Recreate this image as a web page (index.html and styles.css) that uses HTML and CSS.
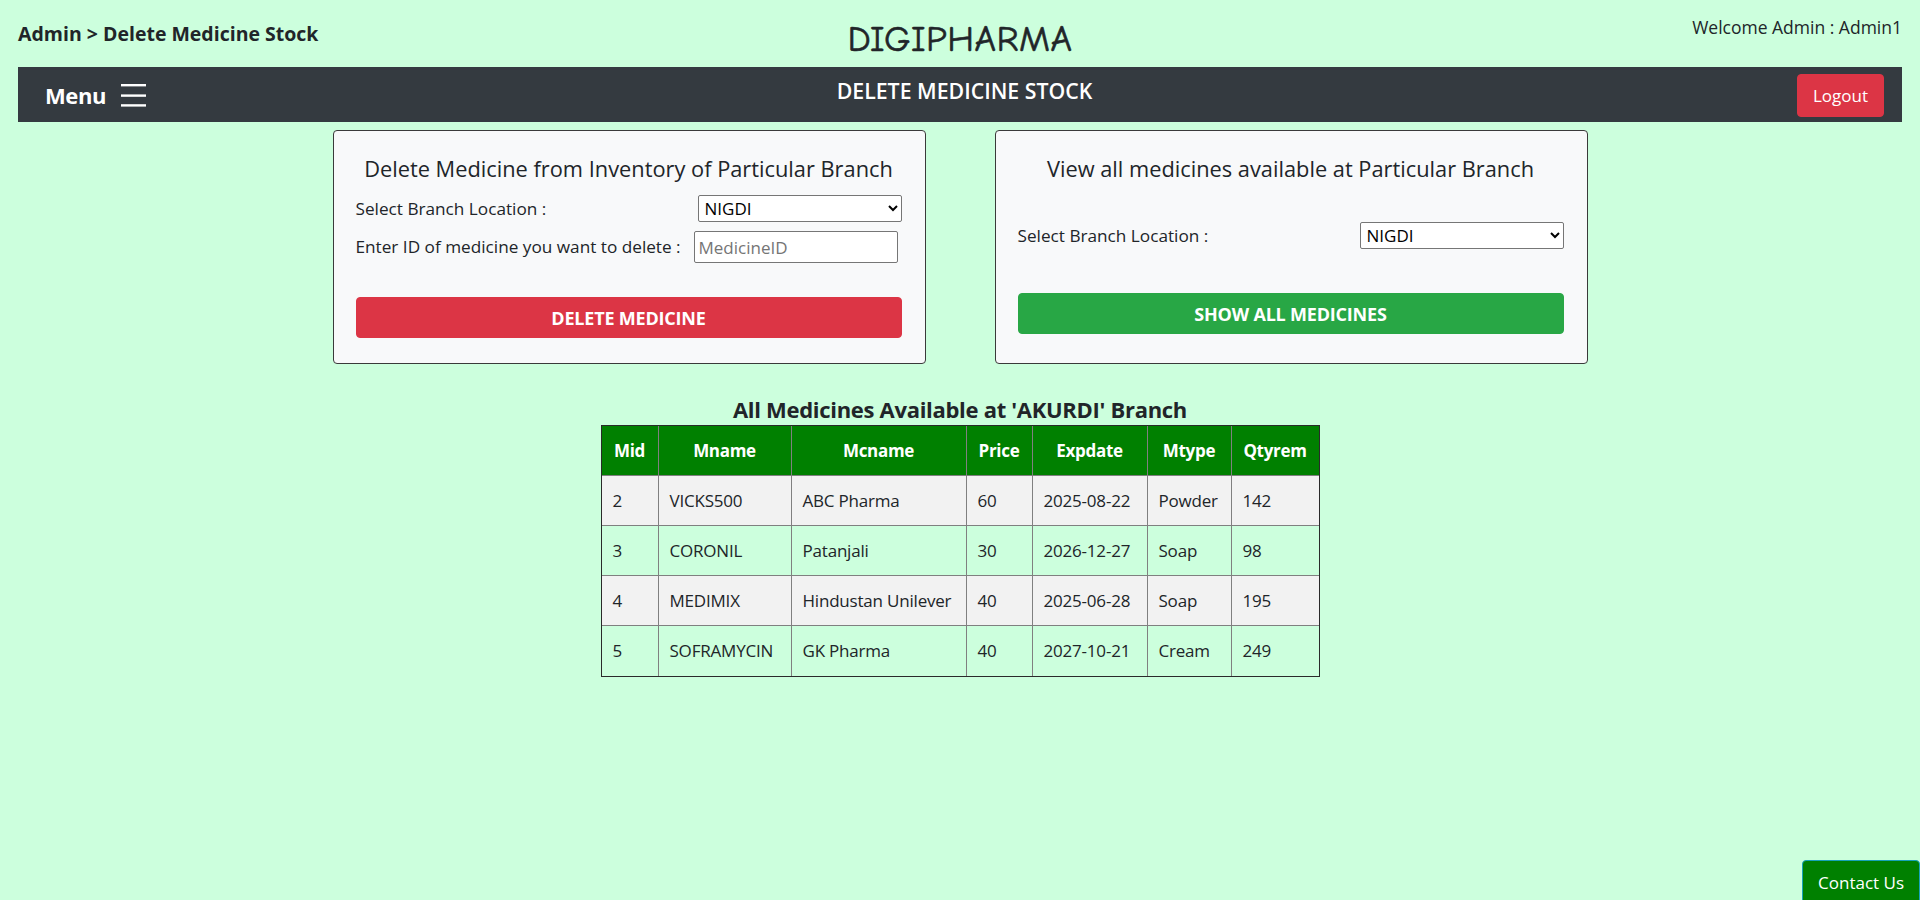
FILE: index.html
```html
<!DOCTYPE html>
<html lang="en">
<head>
<meta charset="utf-8">
<title>Delete Medicine Stock</title>
<link rel="stylesheet" href="styles.css">
</head>
<body>
<header class="topbar">
  <div class="crumb">Admin &gt; Delete Medicine Stock</div>
  <div class="brand">DIGIPHARMA</div>
  <div class="welcome">Welcome Admin : Admin1</div>
</header>

<nav class="navbar">
  <div class="menu">
    <span class="menu-label">Menu</span>
    <svg class="burger" width="26" height="24" viewBox="0 0 26 24" aria-hidden="true">
      <rect x="0" y="1" width="25" height="2.4" fill="#fff"/>
      <rect x="0" y="11.4" width="25" height="2.4" fill="#fff"/>
      <rect x="0" y="21.2" width="25" height="2.4" fill="#fff"/>
    </svg>
  </div>
  <div class="nav-title">DELETE MEDICINE STOCK</div>
  <div class="nav-right"><button class="btn-logout">Logout</button></div>
</nav>

<main class="content">
  <section class="cards">
    <form class="card card-delete">
      <h5 class="card-title">Delete Medicine from Inventory of Particular Branch</h5>
      <div class="form-row row-first">
        <label>Select Branch Location :</label>
        <select class="sel sel-a"><option>NIGDI</option></select>
      </div>
      <div class="form-row row-second">
        <label>Enter ID of medicine you want to delete :</label>
        <input class="inp" type="text" placeholder="MedicineID">
      </div>
      <button type="button" class="btn btn-red">DELETE MEDICINE</button>
    </form>

    <form class="card card-view">
      <h5 class="card-title">View all medicines available at Particular Branch</h5>
      <div class="form-row row-view">
        <label>Select Branch Location :</label>
        <select class="sel sel-b"><option>NIGDI</option></select>
      </div>
      <button type="button" class="btn btn-green">SHOW ALL MEDICINES</button>
    </form>
  </section>

  <section class="list">
    <h5 class="list-title">All Medicines Available at 'AKURDI' Branch</h5>
    <table class="meds">
      <colgroup>
        <col class="c1"><col class="c2"><col class="c3"><col class="c4"><col class="c5"><col class="c6"><col class="c7">
      </colgroup>
      <thead>
        <tr><th>Mid</th><th>Mname</th><th>Mcname</th><th>Price</th><th>Expdate</th><th>Mtype</th><th>Qtyrem</th></tr>
      </thead>
      <tbody>
        <tr><td>2</td><td>VICKS500</td><td>ABC Pharma</td><td>60</td><td>2025-08-22</td><td>Powder</td><td>142</td></tr>
        <tr><td>3</td><td>CORONIL</td><td>Patanjali</td><td>30</td><td>2026-12-27</td><td>Soap</td><td>98</td></tr>
        <tr><td>4</td><td>MEDIMIX</td><td>Hindustan Unilever</td><td>40</td><td>2025-06-28</td><td>Soap</td><td>195</td></tr>
        <tr><td>5</td><td>SOFRAMYCIN</td><td>GK Pharma</td><td>40</td><td>2027-10-21</td><td>Cream</td><td>249</td></tr>
      </tbody>
    </table>
  </section>
</main>

<button class="contact">Contact Us</button>
</body>
</html>
```

FILE: styles.css
```css
* { box-sizing: border-box; }

html, body {
  margin: 0;
  padding: 0;
}

body {
  background: #ccffdd;
  color: #212529;
  font-family: "Open Sans", "Noto Sans", Arial, sans-serif;
  font-size: 17px;
  line-height: 1.5;
  height: 900px;
  overflow: hidden;
}

/* ---------- top header ---------- */
.topbar {
  display: grid;
  grid-template-columns: 1fr auto 1fr;
  align-items: start;
  padding: 0 18px;
  height: 67px;
}

.crumb {
  padding-top: 21px;
  font-size: 19.5px;
  font-weight: 700;
  line-height: 26px;
}

.brand {
  padding-top: 17px;
  font-family: "Comic Sans MS", "Comic Neue", "DejaVu Sans", sans-serif;
  font-size: 37px;
  font-weight: 500;
  line-height: 44px;
  letter-spacing: 0.5px;
  color: #212529;
  -webkit-text-stroke: 0.6px #212529;
}

.welcome {
  justify-self: end;
  padding-top: 14px;
  font-size: 17.5px;
  line-height: 26px;
}

/* ---------- navbar ---------- */
.navbar {
  margin: 0 18px;
  height: 55px;
  background: #343a40;
  display: grid;
  grid-template-columns: 1fr auto 1fr;
  align-items: center;
  padding: 0 18px 0 27px;
}

.menu {
  display: flex;
  align-items: center;
  gap: 15px;
  color: #fff;
}

.menu-label {
  font-size: 22px;
  font-weight: 700;
  letter-spacing: -0.4px;
  line-height: 30px;
}

.burger { display: block; }

.nav-title {
  color: #fff;
  font-size: 21.3px;
  font-weight: 600;
  line-height: 28px;
  margin-bottom: 8px;
}

.nav-right {
  display: flex;
  justify-content: flex-end;
}

.btn-logout {
  background: #dc3545;
  color: #fff;
  border: 1px solid #dc3545;
  border-radius: 4px;
  font-family: inherit;
  font-size: 17px;
  line-height: 25px;
  height: 43px;
  padding: 0 15px;
  margin-top: 1px;
}

/* ---------- cards ---------- */
.content {
  padding-top: 8px;
}

.cards {
  display: flex;
  justify-content: center;
  gap: 69px;
}

.card {
  width: 593px;
  height: 234px;
  background: #f8f9fa;
  border: 1px solid #3a3a3a;
  border-radius: 4px;
  padding: 24px 23px 0 22px;
  margin: 0;
}

.card-title {
  margin: 0;
  text-align: center;
  font-size: 21.8px;
  font-weight: 500;
  line-height: 27px;
}

.form-row {
  display: flex;
  justify-content: space-between;
  align-items: center;
}

.form-row label {
  font-size: 17.2px;
}

.row-first { margin-top: 13px; }
.row-second { margin-top: 9px; padding-right: 4px; }
.row-view { margin-top: 40px; }

.sel {
  width: 204px;
  height: 27px;
  font-family: inherit;
  font-size: 17px;
  color: #000;
  background: #fff;
  border: 1px solid #767676;
  border-radius: 2px;
  padding: 0 2px;
}

.inp {
  width: 204px;
  height: 32px;
  font-family: inherit;
  font-size: 17px;
  background: #fff;
  border: 1px solid #767676;
  border-radius: 2px;
  padding: 1px 4px;
}

.inp::placeholder { color: #757575; }

.btn {
  display: block;
  width: 100%;
  height: 41px;
  border-radius: 4px;
  color: #fff;
  font-family: inherit;
  font-size: 18px;
  font-weight: 700;
  letter-spacing: -0.2px;
}

.btn-red {
  margin-top: 34px;
  background: #dc3545;
  border: 1px solid #dc3545;
}

.btn-green {
  margin-top: 44px;
  background: #28a745;
  border: 1px solid #28a745;
}

/* ---------- table ---------- */
.list {
  display: flex;
  flex-direction: column;
  align-items: center;
  margin-top: 32px;
}

.list-title {
  margin: 0 0 3px;
  font-size: 22px;
  font-weight: 700;
  line-height: 26px;
  letter-spacing: -0.3px;
}

.meds {
  width: 719px;
  table-layout: fixed;
  border-collapse: separate;
  border-spacing: 0;
  border: 1px solid #2a2a2a;
}

.c1 { width: 57px; }
.c2 { width: 133px; }
.c3 { width: 175px; }
.c4 { width: 66px; }
.c5 { width: 115px; }
.c6 { width: 84px; }
.c7 { width: 87px; }

.meds th,
.meds td {
  height: 50px;
  padding: 0 11px;
  border-right: 1px solid #808080;
  border-bottom: 1px solid #808080;
  font-size: 17px;
  white-space: nowrap;
}

.meds th:last-child,
.meds td:last-child { border-right: none; }

.meds tbody tr:last-child td { border-bottom: none; }

.meds th {
  background: #008000;
  color: #fff;
  font-weight: 700;
  text-align: center;
  letter-spacing: -0.3px;
  padding: 0 4px;
}

.meds td {
  text-align: left;
  padding-left: 11px;
  letter-spacing: -0.2px;
}

.meds tbody tr:nth-child(odd) td { background: #f2f2f2; }

/* ---------- contact ---------- */
.contact {
  position: fixed;
  right: 0;
  bottom: -6px;
  background: #008000;
  color: #fff;
  border: 1px solid #17a2b8;
  border-radius: 4px;
  font-family: inherit;
  font-size: 17px;
  line-height: 24px;
  padding: 10px 15px;
}
```
